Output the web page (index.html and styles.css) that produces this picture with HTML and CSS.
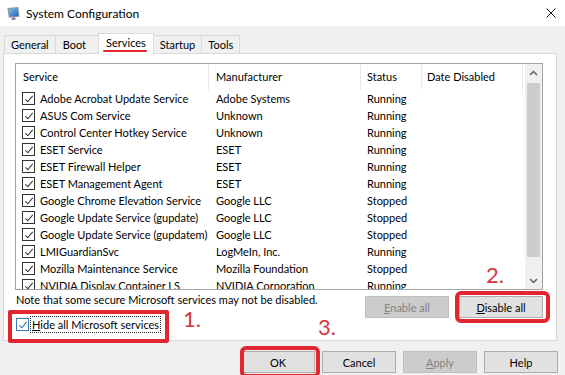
FILE: index.html
```html
<!DOCTYPE html>
<html lang="en">
<head>
  <meta charset="UTF-8">
  <title>System Configuration</title>
  <link rel="stylesheet" href="styles.css">
</head>
<body>
  <div class="window">
    <div class="titlebar">
      <svg class="app-icon" width="15" height="15" viewBox="0 0 16 16">
        <defs>
          <linearGradient id="scr" x1="0" y1="0" x2="1" y2="1">
            <stop offset="0" stop-color="#7fc4f5"/>
            <stop offset="1" stop-color="#1f5fb8"/>
          </linearGradient>
        </defs>
        <path d="M1.5 2 L13 1 L14.5 11.5 L3 12.5 Z" fill="#8c95a3"/>
        <path d="M3 3.2 L12 2.4 L13.1 10.3 L4.1 11.1 Z" fill="url(#scr)"/>
        <path d="M7 12.3 L9.5 12.1 L10.5 14.3 L5.5 14.8 Z" fill="#6f7785"/>
      </svg>
      <span class="title">System Configuration</span>
      <svg class="close" width="10" height="10" viewBox="0 0 10 10">
        <path d="M0.5 0.5 L9.5 9.5 M9.5 0.5 L0.5 9.5" stroke="#111" stroke-width="1"/>
      </svg>
    </div>

    <div class="tabs">
      <div class="tab">General</div>
      <div class="tab tab-boot">Boot</div>
      <div class="tab active">Services</div>
      <div class="tab">Startup</div>
      <div class="tab">Tools</div>
    </div>

    <div class="panel">
      <div class="listbox">
        <div class="list">
          <div class="row head">
            <div class="c1">Service</div>
            <div class="c2">Manufacturer</div>
            <div class="c3">Status</div>
            <div class="c4">Date Disabled</div>
          </div>
          <div class="row"><div class="c1"><span class="cb"></span>Adobe Acrobat Update Service</div><div class="c2">Adobe Systems</div><div class="c3">Running</div><div class="c4"></div></div>
          <div class="row"><div class="c1"><span class="cb"></span>ASUS Com Service</div><div class="c2">Unknown</div><div class="c3">Running</div><div class="c4"></div></div>
          <div class="row"><div class="c1"><span class="cb"></span>Control Center Hotkey Service</div><div class="c2">Unknown</div><div class="c3">Running</div><div class="c4"></div></div>
          <div class="row"><div class="c1"><span class="cb"></span>ESET Service</div><div class="c2">ESET</div><div class="c3">Running</div><div class="c4"></div></div>
          <div class="row"><div class="c1"><span class="cb"></span>ESET Firewall Helper</div><div class="c2">ESET</div><div class="c3">Running</div><div class="c4"></div></div>
          <div class="row"><div class="c1"><span class="cb"></span>ESET Management Agent</div><div class="c2">ESET</div><div class="c3">Running</div><div class="c4"></div></div>
          <div class="row"><div class="c1"><span class="cb"></span>Google Chrome Elevation Service</div><div class="c2">Google LLC</div><div class="c3">Stopped</div><div class="c4"></div></div>
          <div class="row"><div class="c1"><span class="cb"></span>Google Update Service (gupdate)</div><div class="c2">Google LLC</div><div class="c3">Stopped</div><div class="c4"></div></div>
          <div class="row"><div class="c1"><span class="cb"></span>Google Update Service (gupdatem)</div><div class="c2">Google LLC</div><div class="c3">Stopped</div><div class="c4"></div></div>
          <div class="row"><div class="c1"><span class="cb"></span>LMIGuardianSvc</div><div class="c2">LogMeIn, Inc.</div><div class="c3">Running</div><div class="c4"></div></div>
          <div class="row"><div class="c1"><span class="cb"></span>Mozilla Maintenance Service</div><div class="c2">Mozilla Foundation</div><div class="c3">Stopped</div><div class="c4"></div></div>
          <div class="row"><div class="c1"><span class="cb"></span>NVIDIA Display Container LS</div><div class="c2">NVIDIA Corporation</div><div class="c3">Running</div><div class="c4"></div></div>
        </div>
        <div class="scrollbar">
          <div class="sb-arrow">
            <svg width="9" height="6" viewBox="0 0 9 6"><path d="M1 5 L4.5 1.5 L8 5" fill="none" stroke="#606060" stroke-width="1.5"/></svg>
          </div>
          <div class="sb-thumb"></div>
          <div class="sb-track"></div>
          <div class="sb-arrow">
            <svg width="9" height="6" viewBox="0 0 9 6"><path d="M1 1 L4.5 4.5 L8 1" fill="none" stroke="#606060" stroke-width="1.5"/></svg>
          </div>
        </div>
      </div>

      <div class="below">
        <div class="left">
          <p class="note">Note that some secure Microsoft services may not be disabled.</p>
          <label class="hide">
            <span class="cb focus"></span>
            <span class="hide-text"><u>H</u>ide all Microsoft services</span>
          </label>
        </div>
        <div class="actions">
          <button class="btn wide" disabled><u>E</u>nable all</button>
          <button class="btn wide"><u>D</u>isable all</button>
        </div>
      </div>
    </div>

    <div class="footer">
      <button class="btn">OK</button>
      <button class="btn">Cancel</button>
      <button class="btn" disabled><u>A</u>pply</button>
      <button class="btn">Help</button>
    </div>

    <!-- red annotations drawn over the dialog -->
    <div class="annot box-hide"></div>
    <div class="annot box-disable"></div>
    <div class="annot box-ok"></div>
    <span class="step step1">1.</span>
    <span class="step step2">2.</span>
    <span class="step step3">3.</span>
  </div>
</body>
</html>
```

FILE: styles.css
```css
:root {
  --face: #f0f0f0;
  --edge: #d9d9d9;
  --mark: #e2262f;
}

body {
  margin: 0;
  font-family: "Lato", "Noto Sans", sans-serif;
  font-size: 11px;
  color: #000;
  background: var(--face);
}

.window {
  position: relative;
  width: 565px;
  height: 375px;
  overflow: hidden;
}

.titlebar {
  height: 26px;
  background: #fff;
  display: flex;
  align-items: center;
  padding-left: 6px;
}

.title {
  margin-left: 5px;
  font-size: 12px;
}

.close {
  margin-left: auto;
  margin-right: 9px;
}

.tabs {
  display: flex;
  align-items: flex-end;
  height: 27px;
  padding-left: 4px;
  box-sizing: border-box;
}

.tab {
  height: 18px;
  line-height: 18px;
  padding: 0 6px;
  border: 1px solid var(--edge);
  border-bottom: none;
  margin-right: -1px;
  box-sizing: border-box;
  background: var(--face);
}

.tab-boot {
  padding: 0 12px 0 7px;
}

.tab.active {
  position: relative;
  z-index: 1;
  height: 21px;
  line-height: 18px;
  margin-bottom: -1px;
  padding: 0 7px;
  background: #fff;
}

.tab.active::after {
  content: "";
  position: absolute;
  left: 4px;
  right: 6px;
  bottom: 2px;
  height: 2.5px;
  border-radius: 2px;
  background: var(--mark);
}

.panel {
  height: 288px;
  margin: 0 8px 0 3px;
  padding: 9px 13px 0 11px;
  background: #fff;
  border: 1px solid var(--edge);
  box-sizing: border-box;
}

.listbox {
  display: flex;
  height: 227px;
  border: 1px solid #a3a3a3;
  box-sizing: border-box;
}

.list {
  flex: 1;
  overflow: hidden;
}

.row {
  display: flex;
  height: 17px;
  line-height: 17px;
  white-space: nowrap;
}

.row > div {
  overflow: hidden;
}

.row.head {
  height: 26px;
  line-height: 26px;
}

.row.head > div {
  border-right: 1px solid #e8e8e8;
  box-sizing: border-box;
}

.c1 { width: 193px; padding-left: 7px; box-sizing: border-box; display: flex; align-items: center; }
.c2 { width: 152px; padding-left: 7px; box-sizing: border-box; }
.c3 { width: 61px; padding-left: 6px; box-sizing: border-box; }
.c4 { width: 101px; padding-left: 5px; box-sizing: border-box; }

.row:not(.head) .c1 {
  padding-left: 6px;
}

.cb {
  position: relative;
  flex: none;
  width: 13px;
  height: 13px;
  margin-right: 5px;
  border: 1px solid #333;
  box-sizing: border-box;
  background: #fff;
}

.cb::after {
  content: "";
  position: absolute;
  left: 3.5px;
  top: 0.5px;
  width: 3px;
  height: 7px;
  border: solid #333;
  border-width: 0 1px 1px 0;
  transform: rotate(40deg);
}

.cb.focus {
  border-color: #3d7ab7;
  margin-right: 2px;
}

.cb.focus::after {
  border-color: #2e6fb0;
}

.scrollbar {
  display: flex;
  flex-direction: column;
  width: 17px;
  margin-left: 2px;
  background: var(--face);
}

.sb-arrow {
  height: 17px;
  display: flex;
  align-items: center;
  justify-content: center;
}

.sb-thumb {
  height: 174px;
  margin: 2px 2px 0;
  background: #cdcdcd;
}

.sb-track {
  flex: 1;
}

.below {
  display: flex;
  justify-content: space-between;
}

.note {
  margin: 2px 0 0 1px;
  line-height: 16px;
}

.hide {
  display: flex;
  align-items: center;
  margin-top: 9px;
  margin-left: 1px;
}

.hide-text {
  outline: 1px dotted #222;
  line-height: 15px;
  padding: 0 1px;
}

.actions {
  display: flex;
  gap: 10px;
  margin-top: 6px;
}

.btn {
  width: 74px;
  height: 22px;
  padding: 0;
  font: inherit;
  color: #000;
  background: #e1e1e1;
  border: 1px solid #adadad;
}

.btn.wide {
  width: 84px;
}

.btn:disabled {
  color: #838383;
  background: #cccccc;
  border-color: #bfbfbf;
}

.footer {
  display: flex;
  justify-content: flex-end;
  gap: 7px;
  padding: 10px 7px 0 0;
}

.annot {
  position: absolute;
  border: 4px solid var(--mark);
  border-radius: 6px;
  box-sizing: border-box;
}

.box-hide { left: 8px; top: 310px; width: 161px; height: 33px; border-radius: 2px; }
.box-disable { left: 455px; top: 291px; width: 95px; height: 32px; }
.box-ok { left: 240px; top: 346px; width: 80px; height: 32px; }

.step {
  position: absolute;
  font-size: 22px;
  line-height: 16px;
  color: #d8353d;
}

.step1 { left: 183px; top: 311px; }
.step2 { left: 486px; top: 267px; }
.step3 { left: 318px; top: 319px; }
```
